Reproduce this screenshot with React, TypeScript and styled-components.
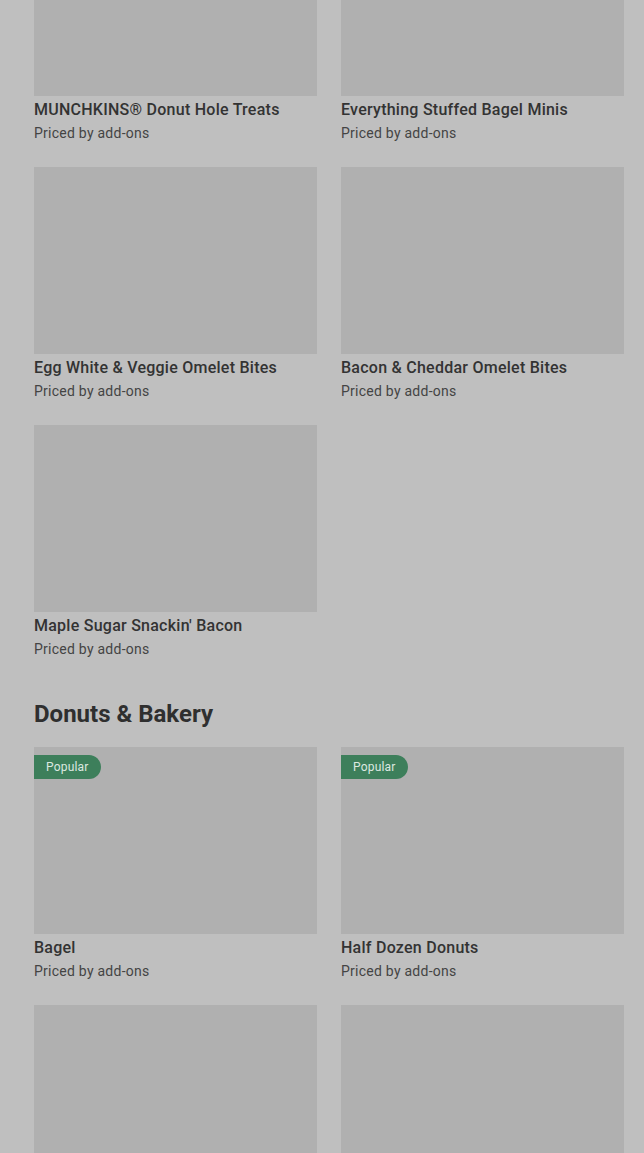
import styled, { createGlobalStyle } from "styled-components";

const GlobalStyle = createGlobalStyle`
  html, body {
    margin: 0;
    padding: 0;
    background: #bfbfbf;
    overflow: hidden;
  }
  body {
    font-family: Roboto, "Noto Sans", sans-serif;
    color: #333333;
  }
`;

type Item = { name: string; popular?: boolean };

const breakfast: Item[] = [
  { name: "MUNCHKINS® Donut Hole Treats" },
  { name: "Everything Stuffed Bagel Minis" },
  { name: "Egg White & Veggie Omelet Bites" },
  { name: "Bacon & Cheddar Omelet Bites" },
  { name: "Maple Sugar Snackin' Bacon" },
];

const bakery: Item[] = [
  { name: "Bagel", popular: true },
  { name: "Half Dozen Donuts", popular: true },
  { name: "Donuts" },
  { name: "Coffee Roll" },
];

function ItemCard({ item }: { item: Item }) {
  return (
    <Card>
      <Thumb>{item.popular && <Badge>Popular</Badge>}</Thumb>
      <Name>{item.name}</Name>
      <Price>Priced by add-ons</Price>
    </Card>
  );
}

export default function App() {
  return (
    <>
      <GlobalStyle />
      <Page>
        <Grid>
          {breakfast.map((item) => (
            <ItemCard key={item.name} item={item} />
          ))}
        </Grid>
        <Section>
          <Heading>Donuts &amp; Bakery</Heading>
          <Grid>
            {bakery.map((item) => (
              <ItemCard key={item.name} item={item} />
            ))}
          </Grid>
        </Section>
      </Page>
    </>
  );
}

const Page = styled.main`
  display: flex;
  flex-direction: column;
  padding: 0 20px 0 34px;
  margin-top: -91px;
`;

const Grid = styled.div`
  display: grid;
  grid-template-columns: repeat(2, 283px);
  column-gap: 24px;
  row-gap: 24px;
`;

const Section = styled.section`
  display: flex;
  flex-direction: column;
  margin-top: 41px;
`;

const Heading = styled.h2`
  margin: 0 0 19px;
  font-size: 24px;
  line-height: 28px;
  font-weight: 700;
  letter-spacing: 0;
  color: #2f2f2f;
`;

const Card = styled.div`
  display: flex;
  flex-direction: column;
`;

const Thumb = styled.div`
  position: relative;
  height: 187px;
  background: #b0b0b0;
`;

const Badge = styled.span`
  position: absolute;
  top: 8px;
  left: 0;
  height: 24px;
  padding: 0 12px;
  display: flex;
  align-items: center;
  background: #3d7f5b;
  color: #dce8e0;
  font-size: 12px;
  letter-spacing: 0.2px;
  border-radius: 0 12px 12px 0;
`;

const Name = styled.div`
  margin-top: 4px;
  font-size: 16px;
  line-height: 20px;
  font-weight: 500;
  letter-spacing: 0.25px;
  color: #333333;
`;

const Price = styled.div`
  margin-top: 3px;
  font-size: 14px;
  line-height: 20px;
  letter-spacing: 0.25px;
  color: #444444;
`;
